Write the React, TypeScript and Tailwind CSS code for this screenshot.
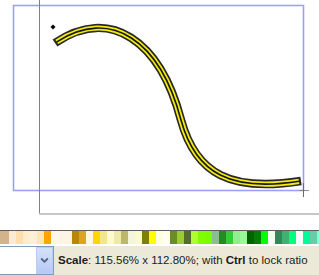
const swatches = [
  "#D2B48C", "#FAEBD7", "#FFDEAD", "#FFEBCD", "#FFEFD5", "#FFE4B5", "#FFA500",
  "#FFF5E8", "#FDF5E6", "#FEF4E2", "#B8860B", "#DAA520", "#FFF8DC", "#FFD700",
  "#F0E68C", "#FFFACD", "#EEE8AA", "#BDB76B", "#F5F5DC", "#FAFAD2", "#808000",
  "#FFFF00", "#FFFFE0", "#FFFFF0", "#6B8E23", "#9ACD32", "#556B2F", "#ADFF2F",
  "#7FFF00", "#7CFC00", "#8FBC8F", "#228B22", "#32CD32", "#90EE90", "#98FB98",
  "#006400", "#008000", "#00FF00", "#F0FFF0", "#2E8B57", "#3CB371", "#00FF7F",
  "#F5FFFA", "#00FA9A", "#66CDAA", "#7FFFD4",
];

const curve =
  "M55 43 C110 6 160 40 181 120 C196 175 232 192 301 181";

function Canvas() {
  return (
    <div className="relative h-[230px] bg-white">
      <svg width="319" height="230" className="block">
        {/* page border */}
        <rect x="13.5" y="5.5" width="290" height="185" fill="none" stroke="#c9c9ff" strokeWidth="2" />
        <rect x="13.5" y="5.5" width="290" height="185" fill="none" stroke="#9d9dff" strokeWidth="1" />
        {/* canvas edges */}
        <line x1="39.5" y1="0" x2="39.5" y2="214" stroke="#808080" strokeWidth="1" />
        <line x1="39" y1="214" x2="319" y2="214" stroke="#c8c8c8" strokeWidth="2" />
        {/* curve */}
        <path d={curve} fill="none" stroke="#101010" strokeWidth="8.5" opacity="0.9" />
        <path
          d={curve}
          fill="none"
          stroke="#f2ea10"
          strokeWidth="5.2"
          pathLength={1000}
          strokeDasharray="988 1000"
          strokeDashoffset="-6"
        />
        <path
          d={curve}
          fill="none"
          stroke="#161616"
          strokeWidth="1.6"
          pathLength={1000}
          strokeDasharray="990 1000"
          strokeDashoffset="-5"
        />
        {/* node diamond */}
        <polygon points="53,24.5 55.5,27 53,29.5 50.5,27" fill="#000" />
        {/* cursor cross */}
        <line x1="299" y1="190.5" x2="309" y2="190.5" stroke="#8a8a8a" strokeWidth="1" />
        <line x1="303.5" y1="183" x2="303.5" y2="197" stroke="#6a6a6a" strokeWidth="1" />
      </svg>
    </div>
  );
}

function Palette() {
  return (
    <div className="flex h-[15px] overflow-hidden border-t border-t-[#5e5e5e] bg-white">
      {swatches.map((c, i) => (
        <div
          key={i}
          className={i === 0 ? "h-[13px] w-[9px] shrink-0" : "h-[13px] w-[7px] shrink-0"}
          style={{ backgroundColor: c }}
        />
      ))}
    </div>
  );
}

function StatusBar() {
  return (
    <div className="flex h-[29px] items-stretch bg-[#ece9d8]">
      <div className="flex w-[54px] shrink-0 border-y border-r border-[#7f9db9] bg-white">
        <div className="flex-1" />
        <div className="flex w-[17px] items-center justify-center border border-[#b9cdf6] bg-gradient-to-b from-[#d6e2fb] to-[#b6c9f5]">
          <svg width="9" height="7" viewBox="0 0 9 7">
            <path d="M1.2 1.5 L4.5 4.8 L7.8 1.5" fill="none" stroke="#4d6185" strokeWidth="1.8" />
          </svg>
        </div>
      </div>
      <div className="flex items-center pl-[4px] font-['Liberation_Sans',Arial,sans-serif] text-[11.5px] text-[#1c1c1c] whitespace-nowrap">
        <span>
          <b>Scale</b>: 115.56% x 112.80%; with <b>Ctrl</b> to lock ratio
        </span>
      </div>
    </div>
  );
}

export default function App() {
  return (
    <div className="h-[275px] w-[319px] overflow-hidden bg-white">
      <Canvas />
      <Palette />
      <div className="h-[1px] bg-white" />
      <StatusBar />
    </div>
  );
}
